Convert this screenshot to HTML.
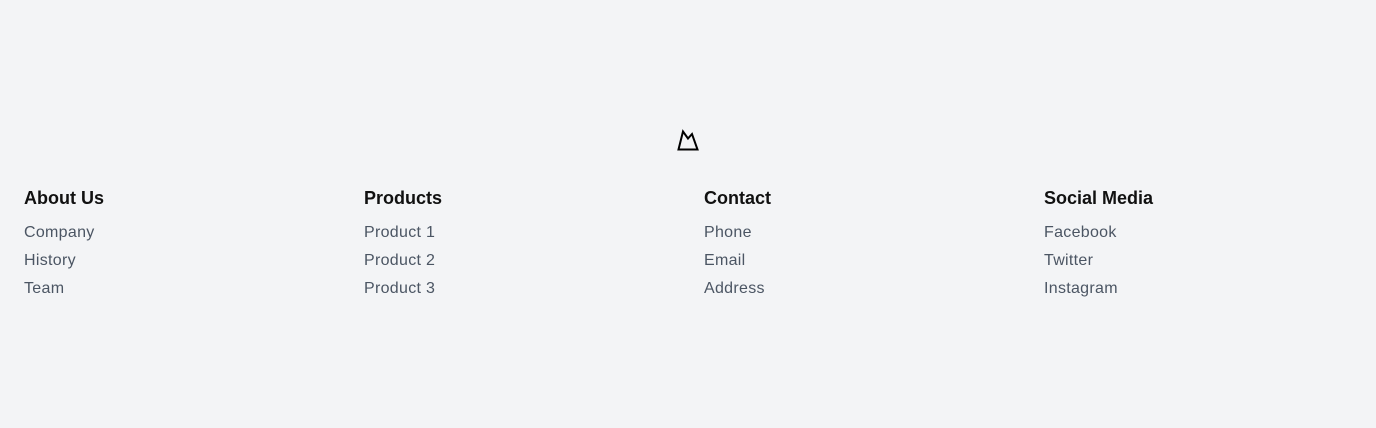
<!DOCTYPE html>
<html><head><style>
body{margin:0;background:#f3f4f6;font-family:"Liberation Sans",sans-serif;width:1376px;height:428px;position:relative;overflow:hidden}
.col{position:absolute;top:186px}
h3{margin:0;font-size:18px;font-weight:bold;color:#111;line-height:24px}
a{display:block;color:#4b5563;font-size:16px;line-height:28px;text-decoration:none;letter-spacing:0.3px}
.l{margin-top:9px}
</style></head><body>
<svg style="position:absolute;left:676px;top:128px" width="24" height="24" viewBox="676 128 24 24"><path d="M678.5 149.5 L683 131.5 L688 138.5 L692 134 L697.5 149.5 Z" fill="none" stroke="#000" stroke-width="2" stroke-linejoin="miter"/></svg>
<div class="col" style="left:24px"><h3>About Us</h3><div class="l"><a>Company</a><a>History</a><a>Team</a></div></div>
<div class="col" style="left:364px"><h3>Products</h3><div class="l"><a>Product 1</a><a>Product 2</a><a>Product 3</a></div></div>
<div class="col" style="left:704px"><h3>Contact</h3><div class="l"><a>Phone</a><a>Email</a><a>Address</a></div></div>
<div class="col" style="left:1044px"><h3>Social Media</h3><div class="l"><a>Facebook</a><a>Twitter</a><a>Instagram</a></div></div>
</body></html>
